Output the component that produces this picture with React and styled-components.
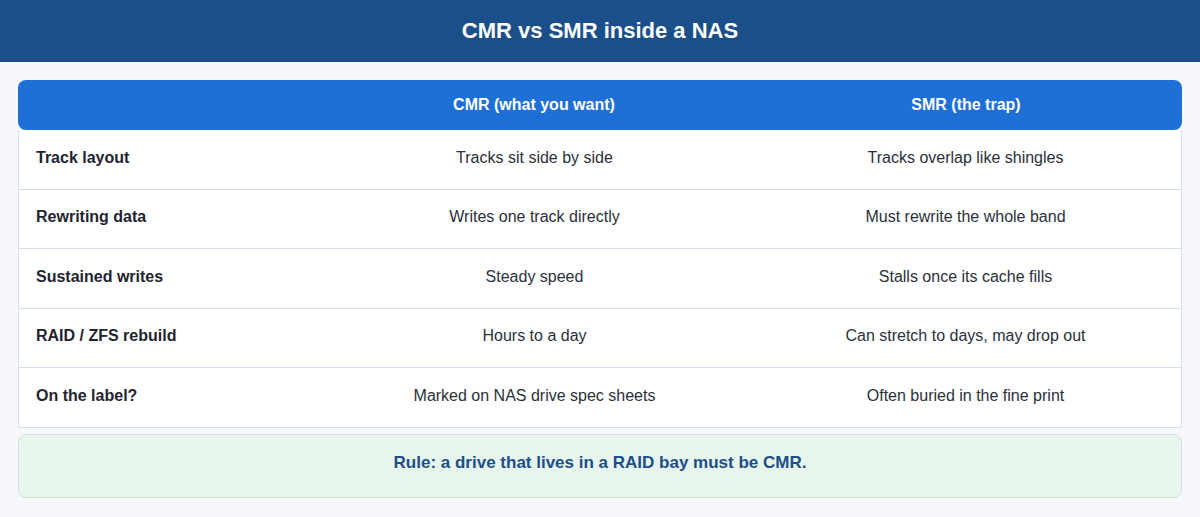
import React from "react";
import styled, { createGlobalStyle } from "styled-components";

const GlobalStyle = createGlobalStyle`
  html, body {
    margin: 0;
    padding: 0;
    background: #f6f8fc;
    font-family: "Liberation Sans", Arial, sans-serif;
  }
`;

const Page = styled.div`
  width: 1200px;
  height: 517px;
  display: flex;
  flex-direction: column;
  background: #f6f8fc;
`;

const TopBar = styled.header`
  height: 62px;
  background: #1b4f8a;
  display: flex;
  align-items: center;
  justify-content: center;
  color: #ffffff;
  font-size: 22px;
  font-weight: 700;
`;

const Content = styled.main`
  padding: 18px 18px 0;
  display: flex;
  flex-direction: column;
  gap: 6px;
`;

const Table = styled.div`
  display: flex;
  flex-direction: column;
`;

const HeadRow = styled.div`
  display: grid;
  grid-template-columns: 300px 1fr 1fr;
  height: 50px;
  align-items: center;
  background: #1e6fd6;
  border-radius: 8px;
  color: #ffffff;
  font-size: 16px;
  font-weight: 700;
  text-align: center;
`;

const Row = styled.div`
  display: grid;
  grid-template-columns: 300px 1fr 1fr;
  box-sizing: border-box;
  height: 59.5px;
  padding-bottom: 3px;
  align-items: center;
  background: #ffffff;
  border: 1px solid #d6e0ec;
  border-top: none;
  font-size: 16px;
  color: #2b303b;
`;

const Label = styled.div`
  padding-left: 17px;
  font-weight: 700;
  color: #1f2430;
`;

const Cell = styled.div`
  text-align: center;
`;

const Rule = styled.div`
  box-sizing: border-box;
  height: 64px;
  padding-bottom: 5px;
  border: 1px solid #d3e3da;
  border-radius: 8px;
  background: #e8f5ec;
  display: flex;
  align-items: center;
  justify-content: center;
  color: #1b4f8a;
  font-size: 17px;
  font-weight: 700;
`;

const rows = [
  ["Track layout", "Tracks sit side by side", "Tracks overlap like shingles"],
  ["Rewriting data", "Writes one track directly", "Must rewrite the whole band"],
  ["Sustained writes", "Steady speed", "Stalls once its cache fills"],
  ["RAID / ZFS rebuild", "Hours to a day", "Can stretch to days, may drop out"],
  ["On the label?", "Marked on NAS drive spec sheets", "Often buried in the fine print"],
];

const App = () => {
  return (
    <>
      <GlobalStyle />
      <Page>
        <TopBar>CMR vs SMR inside a NAS</TopBar>
        <Content>
          <Table>
            <HeadRow>
              <div />
              <div>CMR (what you want)</div>
              <div>SMR (the trap)</div>
            </HeadRow>
            {rows.map(([label, cmr, smr]) => (
              <Row key={label}>
                <Label>{label}</Label>
                <Cell>{cmr}</Cell>
                <Cell>{smr}</Cell>
              </Row>
            ))}
          </Table>
          <Rule>Rule: a drive that lives in a RAID bay must be CMR.</Rule>
        </Content>
      </Page>
    </>
  );
};

export default App;
